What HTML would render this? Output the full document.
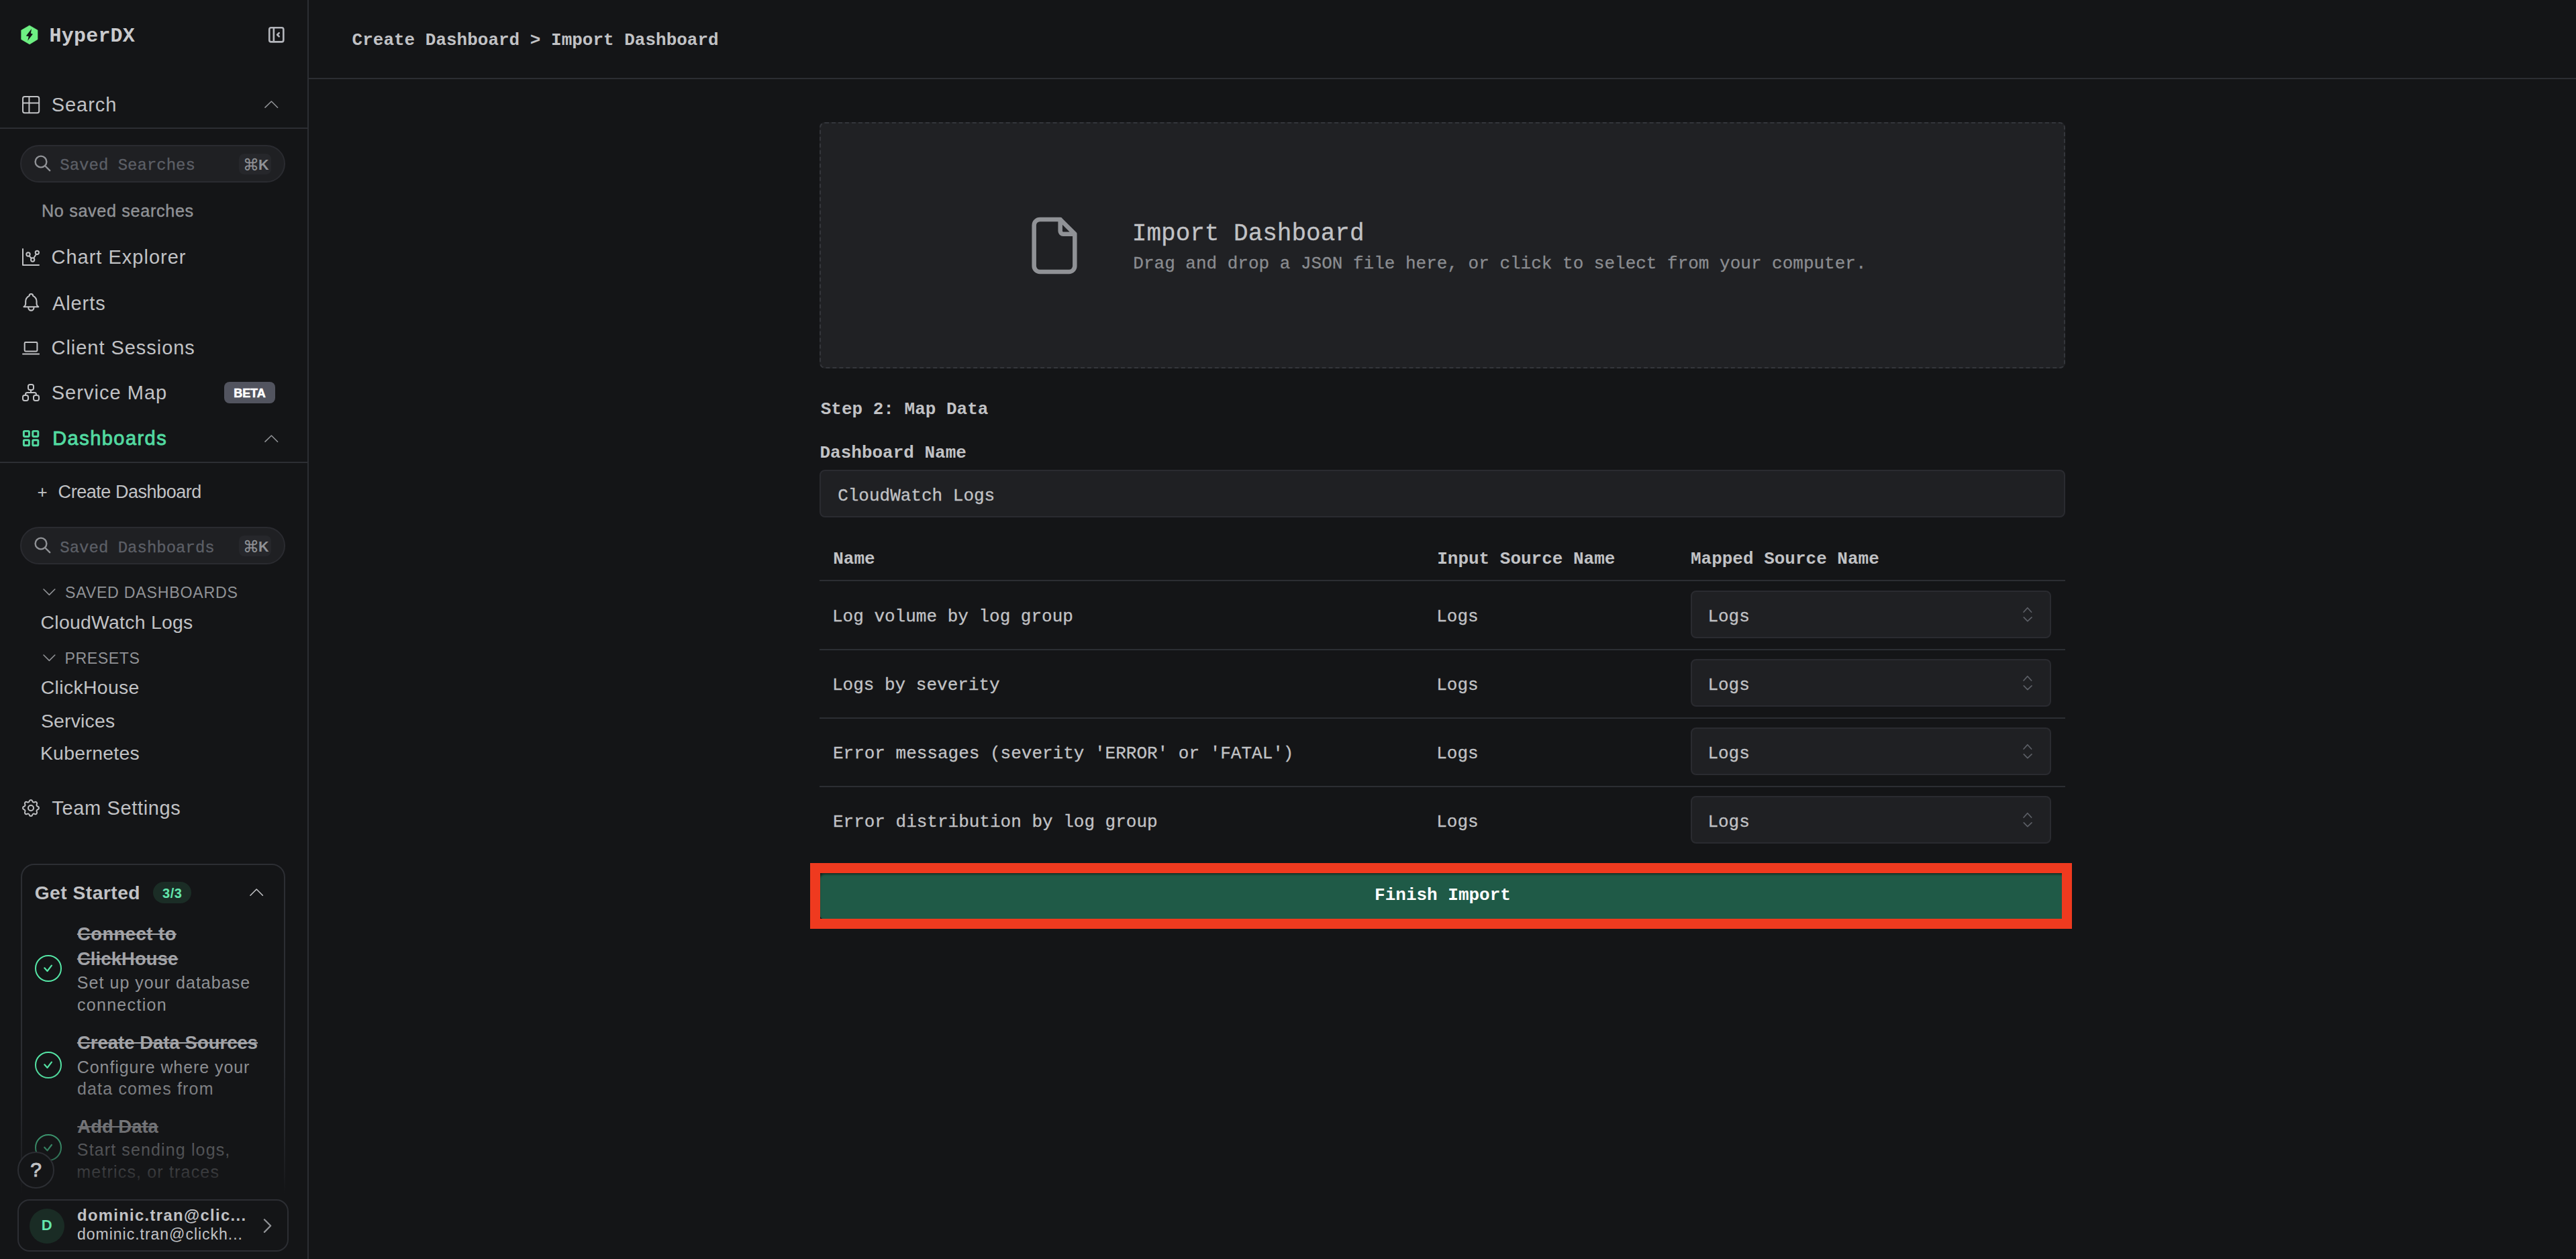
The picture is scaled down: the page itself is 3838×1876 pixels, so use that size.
<!DOCTYPE html>
<html><head><meta charset="utf-8"><title>HyperDX - Import Dashboard</title>
<style>
html,body{margin:0;padding:0;background:#141517;overflow:hidden;}
@media (min-width:2400px){html{zoom:2;}}
#root{position:relative;width:1919px;height:938px;overflow:hidden;background:#141517;font-family:'Liberation Sans', sans-serif;}
.t{position:absolute;white-space:nowrap;}
.b{position:absolute;}
.i{position:absolute;overflow:visible;}
</style></head><body><div id="root">
<div class="b" style="left:229px;top:0px;width:1.00px;height:938.00px;background:#2c2e33;"></div>
<svg class="i" style="left:0;top:0;width:40px;height:40px" viewBox="0 0 40 40"><polygon points="21.95,18.95 28.0,22.45 28.0,29.35 22.05,32.95 15.85,29.35 15.85,22.55" fill="#6ef083" stroke="#6ef083" stroke-width="0.3" stroke-linejoin="round"/><polygon points="23.49,21.5 19.41,26.79 21.37,27.09 20.62,30.41 24.47,25.43 22.96,24.9" fill="#141517"/></svg>
<div class="t" style="left:36.79px;top:17.56px;font-size:15px;line-height:19.5px;color:#c9cacd;font-family:'Liberation Mono', monospace;font-weight:700;letter-spacing:0.100px;">HyperDX</div>
<svg class="i" style="left:198.03px;top:17.93px;width:15.8px;height:15.8px;" viewBox="0 0 24 24" fill="none" stroke="#b4b6bc" stroke-width="2" stroke-linecap="round" stroke-linejoin="round"><path d="M4 6a2 2 0 0 1 2 -2h12a2 2 0 0 1 2 2v12a2 2 0 0 1 -2 2h-12a2 2 0 0 1 -2 -2z M9 4v16 M15 10l-2 2l2 2"/></svg>
<svg class="i" style="left:14.89px;top:69.79px;width:16.12px;height:16.12px;" viewBox="0 0 24 24" fill="none" stroke="#c1c2c5" stroke-width="1.5" stroke-linecap="round" stroke-linejoin="round"><path d="M3 5a2 2 0 0 1 2 -2h14a2 2 0 0 1 2 2v14a2 2 0 0 1 -2 2h-14a2 2 0 0 1 -2 -2z M3 10h18 M10 3v18"/></svg>
<div class="t" style="left:38.34px;top:69.05px;font-size:14.5px;line-height:18.85px;color:#c1c2c5;letter-spacing:0.491px;">Search</div>
<svg class="i" style="left:194.30px;top:72.60px;width:15.30px;height:10.60px" viewBox="0 0 15.30 10.60" fill="none" stroke="#909296" stroke-width="0.8" stroke-linecap="round" stroke-linejoin="round"><path d="M3.00 7.60 L7.70 3.00 L12.30 7.60"/></svg>
<div class="b" style="left:0px;top:95px;width:229.00px;height:1.00px;background:#2c2e33;"></div>
<div class="b" style="left:15px;top:108px;width:197.50px;height:28.00px;background:#1f2023;border:1px solid #2a2b30;border-radius:14px;box-sizing:border-box;"></div>
<svg class="i" style="left:24.40px;top:114.40px;width:14.4px;height:14.4px;" viewBox="0 0 24 24" fill="none" stroke="#909296" stroke-width="2" stroke-linecap="round" stroke-linejoin="round"><path d="M3 10a7 7 0 1 0 14 0a7 7 0 1 0 -14 0 M21 21l-6 -6"/></svg>
<div class="t" style="left:44.64px;top:115.71px;font-size:12px;line-height:15.6px;color:#5c5f66;font-family:'Liberation Mono', monospace;-webkit-text-stroke:0.15px #5c5f66;">Saved Searches</div>
<div class="b" style="left:178px;top:114.5px;width:23.80px;height:15.30px;background:#26272b;border-radius:4px;"></div>
<div class="t" style="left:181.00px;top:115.14px;font-size:12px;line-height:15.6px;color:#909296;">⌘</div>
<div class="t" style="left:192.48px;top:115.94px;font-size:10.8px;line-height:14.04px;color:#909296;font-weight:700;">K</div>
<div class="t" style="left:30.97px;top:148.84px;font-size:12.6px;line-height:16.38px;color:#909296;letter-spacing:0.333px;-webkit-text-stroke:0.2px #909296;">No saved searches</div>
<svg class="i" style="left:15.05px;top:183.50px;width:16.0px;height:16.0px;" viewBox="0 0 24 24" fill="none" stroke="#c1c2c5" stroke-width="1.5" stroke-linecap="round" stroke-linejoin="round"><path d="M3 3v18h18 M7 9a2 2 0 1 0 4 0a2 2 0 1 0 -4 0 M17 7a2 2 0 1 0 4 0a2 2 0 1 0 -4 0 M12 15a2 2 0 1 0 4 0a2 2 0 1 0 -4 0 M10.16 10.62l2.34 2.88 M15.088 13.328l2.837 -4.586"/></svg>
<div class="t" style="left:38.26px;top:182.55px;font-size:14.5px;line-height:18.85px;color:#c1c2c5;letter-spacing:0.500px;">Chart Explorer</div>
<svg class="i" style="left:14.87px;top:216.97px;width:16.37px;height:16.37px;" viewBox="0 0 24 24" fill="none" stroke="#c1c2c5" stroke-width="1.5" stroke-linecap="round" stroke-linejoin="round"><path d="M10 5a2 2 0 1 1 4 0a7 7 0 0 1 4 6v3a4 4 0 0 0 2 3h-16a4 4 0 0 0 2 -3v-3a7 7 0 0 1 4 -6 M9 17v1a3 3 0 0 0 6 0v-1"/></svg>
<div class="t" style="left:38.97px;top:216.75px;font-size:14.5px;line-height:18.85px;color:#c1c2c5;letter-spacing:0.458px;">Alerts</div>
<svg class="i" style="left:15.02px;top:250.99px;width:16.06px;height:16.06px;" viewBox="0 0 24 24" fill="none" stroke="#c1c2c5" stroke-width="1.5" stroke-linecap="round" stroke-linejoin="round"><path d="M3 19l18 0 M5 7a1 1 0 0 1 1 -1h12a1 1 0 0 1 1 1v8a1 1 0 0 1 -1 1h-12a1 1 0 0 1 -1 -1z"/></svg>
<div class="t" style="left:38.26px;top:249.95px;font-size:14.5px;line-height:18.85px;color:#c1c2c5;letter-spacing:0.480px;">Client Sessions</div>
<svg class="i" style="left:15.05px;top:284.50px;width:16.0px;height:16.0px;" viewBox="0 0 24 24" fill="none" stroke="#c1c2c5" stroke-width="1.5" stroke-linecap="round" stroke-linejoin="round"><path d="M3 17a2 2 0 0 1 2 -2h2a2 2 0 0 1 2 2v2a2 2 0 0 1 -2 2h-2a2 2 0 0 1 -2 -2z M15 17a2 2 0 0 1 2 -2h2a2 2 0 0 1 2 2v2a2 2 0 0 1 -2 2h-2a2 2 0 0 1 -2 -2z M9 5a2 2 0 0 1 2 -2h2a2 2 0 0 1 2 2v2a2 2 0 0 1 -2 2h-2a2 2 0 0 1 -2 -2z M6 15v-1a2 2 0 0 1 2 -2h8a2 2 0 0 1 2 2v1 M12 9l0 3"/></svg>
<div class="t" style="left:38.34px;top:283.65px;font-size:14.5px;line-height:18.85px;color:#c1c2c5;letter-spacing:0.518px;">Service Map</div>
<div class="b" style="left:166.8px;top:284.5px;width:38.00px;height:15.90px;background:#52545f;border-radius:4px;"></div>
<div class="t" style="left:174.10px;top:287.33px;font-size:9px;line-height:11.7px;color:#ffffff;font-weight:700;letter-spacing:-0.020px;-webkit-text-stroke:0.3px #ffffff;">BETA</div>
<svg class="i" style="left:14.95px;top:318.55px;width:16.1px;height:16.1px;" viewBox="0 0 24 24" fill="none" stroke="#52d9a0" stroke-width="2.2" stroke-linecap="round" stroke-linejoin="round"><path d="M4 5a1 1 0 0 1 1 -1h4a1 1 0 0 1 1 1v4a1 1 0 0 1 -1 1h-4a1 1 0 0 1 -1 -1z M14 5a1 1 0 0 1 1 -1h4a1 1 0 0 1 1 1v4a1 1 0 0 1 -1 1h-4a1 1 0 0 1 -1 -1z M4 15a1 1 0 0 1 1 -1h4a1 1 0 0 1 1 1v4a1 1 0 0 1 -1 1h-4a1 1 0 0 1 -1 -1z M14 15a1 1 0 0 1 1 -1h4a1 1 0 0 1 1 1v4a1 1 0 0 1 -1 1h-4a1 1 0 0 1 -1 -1z"/></svg>
<div class="t" style="left:39.11px;top:317.55px;font-size:14.5px;line-height:18.85px;color:#52d9a0;letter-spacing:0.725px;-webkit-text-stroke:0.45px #52d9a0;">Dashboards</div>
<svg class="i" style="left:194.30px;top:321.30px;width:15.30px;height:10.60px" viewBox="0 0 15.30 10.60" fill="none" stroke="#909296" stroke-width="0.8" stroke-linecap="round" stroke-linejoin="round"><path d="M3.00 7.60 L7.70 3.00 L12.30 7.60"/></svg>
<div class="b" style="left:0px;top:344px;width:229.00px;height:1.00px;background:#2c2e33;"></div>
<div class="t" style="left:27.77px;top:358.54px;font-size:13px;line-height:16.9px;color:#c1c2c5;">+</div>
<div class="t" style="left:43.31px;top:358.04px;font-size:13.5px;line-height:17.55px;color:#c1c2c5;letter-spacing:-0.231px;">Create Dashboard</div>
<div class="b" style="left:15px;top:392.6px;width:197.50px;height:28.00px;background:#1f2023;border:1px solid #2a2b30;border-radius:14px;box-sizing:border-box;"></div>
<svg class="i" style="left:24.40px;top:399.00px;width:14.4px;height:14.4px;" viewBox="0 0 24 24" fill="none" stroke="#909296" stroke-width="2" stroke-linecap="round" stroke-linejoin="round"><path d="M3 10a7 7 0 1 0 14 0a7 7 0 1 0 -14 0 M21 21l-6 -6"/></svg>
<div class="t" style="left:44.64px;top:400.31px;font-size:12px;line-height:15.6px;color:#5c5f66;font-family:'Liberation Mono', monospace;-webkit-text-stroke:0.15px #5c5f66;">Saved Dashboards</div>
<div class="b" style="left:178px;top:399.1px;width:23.80px;height:15.30px;background:#26272b;border-radius:4px;"></div>
<div class="t" style="left:181.00px;top:399.74px;font-size:12px;line-height:15.6px;color:#909296;">⌘</div>
<div class="t" style="left:192.48px;top:400.54px;font-size:10.8px;line-height:14.04px;color:#909296;font-weight:700;">K</div>
<svg class="i" style="left:29.50px;top:436.00px;width:14.40px;height:10.20px" viewBox="0 0 14.40 10.20" fill="none" stroke="#909296" stroke-width="0.8" stroke-linecap="round" stroke-linejoin="round"><path d="M3.00 3.00 L7.20 7.20 L11.40 3.00"/></svg>
<div class="t" style="left:48.47px;top:433.94px;font-size:11.6px;line-height:15.08px;color:#909296;letter-spacing:0.380px;">SAVED DASHBOARDS</div>
<div class="t" style="left:30.28px;top:454.55px;font-size:14.2px;line-height:18.46px;color:#c1c2c5;letter-spacing:0.132px;">CloudWatch Logs</div>
<svg class="i" style="left:29.50px;top:484.90px;width:14.40px;height:10.20px" viewBox="0 0 14.40 10.20" fill="none" stroke="#909296" stroke-width="0.8" stroke-linecap="round" stroke-linejoin="round"><path d="M3.00 3.00 L7.20 7.20 L11.40 3.00"/></svg>
<div class="t" style="left:48.25px;top:482.94px;font-size:11.6px;line-height:15.08px;color:#909296;letter-spacing:0.273px;">PRESETS</div>
<div class="t" style="left:30.38px;top:503.15px;font-size:14.2px;line-height:18.46px;color:#c1c2c5;letter-spacing:0.171px;">ClickHouse</div>
<div class="t" style="left:30.46px;top:528.05px;font-size:14.2px;line-height:18.46px;color:#c1c2c5;letter-spacing:0.101px;">Services</div>
<div class="t" style="left:29.94px;top:551.95px;font-size:14.2px;line-height:18.46px;color:#c1c2c5;letter-spacing:0.150px;">Kubernetes</div>
<svg class="i" style="left:15.05px;top:594.07px;width:16px;height:16px;" viewBox="0 0 24 24" fill="none" stroke="#c1c2c5" stroke-width="1.5" stroke-linecap="round" stroke-linejoin="round"><path d="M10.325 4.317c.426 -1.756 2.924 -1.756 3.35 0a1.724 1.724 0 0 0 2.573 1.066c1.543 -.94 3.31 .826 2.37 2.37a1.724 1.724 0 0 0 1.065 2.572c1.756 .426 1.756 2.924 0 3.35a1.724 1.724 0 0 0 -1.066 2.573c.94 1.543 -.826 3.31 -2.37 2.37a1.724 1.724 0 0 0 -2.572 1.065c-.426 1.756 -2.924 1.756 -3.35 0a1.724 1.724 0 0 0 -2.573 -1.066c-1.543 .94 -3.31 -.826 -2.37 -2.37a1.724 1.724 0 0 0 -1.065 -2.572c-1.756 -.426 -1.756 -2.924 0 -3.35a1.724 1.724 0 0 0 1.066 -2.573c-.94 -1.543 .826 -3.31 2.37 -2.37c1 .608 2.296 .07 2.572 -1.065z M9 12a3 3 0 1 0 6 0a3 3 0 0 0 -6 0"/></svg>
<div class="t" style="left:38.67px;top:593.05px;font-size:14.5px;line-height:18.85px;color:#c1c2c5;letter-spacing:0.322px;">Team Settings</div>
<div class="b" style="left:15.3px;top:643.3px;width:197.3px;height:290px;border:1px solid #2c2e33;border-radius:10px;box-sizing:border-box;"></div>
<div class="t" style="left:25.82px;top:656.15px;font-size:14.1px;line-height:18.33px;color:#c1c2c5;font-weight:700;letter-spacing:0.251px;">Get Started</div>
<div class="b" style="left:114px;top:657px;width:28.40px;height:16.00px;background:#1b2d26;border-radius:8px;"></div>
<div class="t" style="left:120.97px;top:659.13px;font-size:10px;line-height:13.0px;color:#63e6ad;font-weight:700;letter-spacing:0.295px;">3/3</div>
<svg class="i" style="left:183.40px;top:659.60px;width:15.20px;height:10.60px" viewBox="0 0 15.20 10.60" fill="none" stroke="#c1c2c5" stroke-width="0.8" stroke-linecap="round" stroke-linejoin="round"><path d="M3.00 7.60 L7.60 3.00 L12.20 7.60"/></svg>
<div class="b" style="left:26px;top:711.4px;width:19.9px;height:19.9px;border:1px solid #55e6a6;border-radius:50%;box-sizing:border-box;"></div>
<svg class="i" style="left:0;top:0;width:60px;height:741.4px" viewBox="0 0 60 741.4" fill="none" stroke="#55e6a6" stroke-width="1.1" stroke-linecap="round" stroke-linejoin="round"><path d="M33.15 721.15 L35.25 723.50 L38.45 719.30"/></svg>
<div class="t" style="left:57.44px;top:686.85px;font-size:13.7px;line-height:17.81px;color:#a2a3a7;font-weight:700;letter-spacing:0.251px;text-decoration:line-through;">Connect to</div>
<div class="t" style="left:57.44px;top:705.25px;font-size:13.7px;line-height:17.81px;color:#a2a3a7;font-weight:700;letter-spacing:0.068px;text-decoration:line-through;">ClickHouse</div>
<div class="t" style="left:57.43px;top:723.94px;font-size:12.5px;line-height:16.25px;color:#909296;letter-spacing:0.515px;">Set up your database</div>
<div class="t" style="left:57.47px;top:740.34px;font-size:12.5px;line-height:16.25px;color:#909296;letter-spacing:0.653px;">connection</div>
<div class="t" style="left:57.44px;top:767.85px;font-size:13.7px;line-height:17.81px;color:#a2a3a7;font-weight:700;letter-spacing:0.034px;text-decoration:line-through;">Create Data Sources</div>
<div class="b" style="left:26px;top:783.4px;width:19.9px;height:19.9px;border:1px solid #55e6a6;border-radius:50%;box-sizing:border-box;"></div>
<svg class="i" style="left:0;top:0;width:60px;height:813.4px" viewBox="0 0 60 813.4" fill="none" stroke="#55e6a6" stroke-width="1.1" stroke-linecap="round" stroke-linejoin="round"><path d="M33.15 793.15 L35.25 795.50 L38.45 791.30"/></svg>
<div class="t" style="left:57.37px;top:786.84px;font-size:12.5px;line-height:16.25px;color:#909296;letter-spacing:0.465px;">Configure where your</div>
<div class="t" style="left:57.48px;top:802.94px;font-size:12.5px;line-height:16.25px;color:#909296;letter-spacing:0.583px;">data comes from</div>
<div class="t" style="left:57.66px;top:830.25px;font-size:13.7px;line-height:17.81px;color:#a2a3a7;font-weight:700;letter-spacing:0.018px;text-decoration:line-through;">Add Data</div>
<div class="b" style="left:26px;top:845.1px;width:19.9px;height:19.9px;border:1px solid #55e6a6;border-radius:50%;box-sizing:border-box;"></div>
<svg class="i" style="left:0;top:0;width:60px;height:875.1px" viewBox="0 0 60 875.1" fill="none" stroke="#55e6a6" stroke-width="1.1" stroke-linecap="round" stroke-linejoin="round"><path d="M33.15 854.85 L35.25 857.20 L38.45 853.00"/></svg>
<div class="t" style="left:57.43px;top:848.34px;font-size:12.5px;line-height:16.25px;color:#909296;letter-spacing:0.564px;">Start sending logs,</div>
<div class="t" style="left:57.17px;top:865.24px;font-size:12.5px;line-height:16.25px;color:#909296;letter-spacing:0.584px;">metrics, or traces</div>
<div class="b" style="left:0px;top:790px;width:229.00px;height:99.00px;background:linear-gradient(to bottom, rgba(20,21,23,0) 0%, rgba(20,21,23,0.33) 48.5%, rgba(20,21,23,0.48) 65.7%, rgba(20,21,23,0.68) 82.8%, rgba(20,21,23,1) 100%);"></div>
<div class="b" style="left:0px;top:889px;width:229.00px;height:49.00px;background:#141517;"></div>
<div class="b" style="left:13px;top:857.8px;width:27.6px;height:27.6px;border:1px solid #2c2e33;border-radius:50%;background:#141517;box-sizing:border-box;"></div>
<div class="t" style="left:22.68px;top:861.45px;font-size:15px;line-height:19.5px;color:#c1c2c5;-webkit-text-stroke:0.5px #c1c2c5;">?</div>
<div class="b" style="left:13.2px;top:893.6px;width:201.6px;height:38.8px;border:1px solid #2c2e33;border-radius:9px;box-sizing:border-box;"></div>
<div class="b" style="left:22px;top:900.5px;width:26px;height:26px;border-radius:50%;background:#1a2c25;"></div>
<div class="t" style="left:30.86px;top:906.14px;font-size:11px;line-height:14.3px;color:#63e6ad;font-weight:700;">D</div>
<div class="t" style="left:57.51px;top:897.84px;font-size:11.9px;line-height:15.47px;color:#c1c2c5;font-weight:700;letter-spacing:0.670px;">dominic.tran@clic...</div>
<div class="t" style="left:57.52px;top:912.44px;font-size:11.5px;line-height:14.95px;color:#c1c2c5;letter-spacing:0.490px;">dominic.tran@clickh...</div>
<svg class="i" style="left:190.02px;top:903.94px;width:18.56px;height:18.56px;" viewBox="0 0 24 24" fill="none" stroke="#909296" stroke-width="1.5" stroke-linecap="round" stroke-linejoin="round"><path d="M9 6l6 6l-6 6"/></svg>
<div class="b" style="left:230px;top:58px;width:1689.00px;height:1.00px;background:#2c2e33;"></div>
<div class="t" style="left:262.29px;top:21.79px;font-size:13px;line-height:16.9px;color:#c1c2c5;font-family:'Liberation Mono', monospace;font-weight:700;">Create Dashboard &gt; Import Dashboard</div>
<div class="b" style="left:610.5px;top:91px;width:928px;height:183.5px;border:1px dashed #34363b;border-radius:4px;background:#202124;box-sizing:border-box;"></div>
<svg class="i" style="left:759.30px;top:156.90px;width:52px;height:52px;" viewBox="0 0 24 24" fill="none" stroke="#909296" stroke-width="1.5" stroke-linecap="round" stroke-linejoin="round"><path d="M14 3v4a1 1 0 0 0 1 1h4 M17 21h-10a2 2 0 0 1 -2 -2v-14a2 2 0 0 1 2 -2h7l5 5v11a2 2 0 0 1 -2 2z"/></svg>
<div class="t" style="left:843.42px;top:163.21px;font-size:18px;line-height:23.4px;color:#c1c2c5;font-family:'Liberation Mono', monospace;-webkit-text-stroke:0.15px #c1c2c5;">Import Dashboard</div>
<div class="t" style="left:844.17px;top:188.49px;font-size:13px;line-height:16.9px;color:#8a8c90;font-family:'Liberation Mono', monospace;-webkit-text-stroke:0.15px #8a8c90;">Drag and drop a JSON file here, or click to select from your computer.</div>
<div class="t" style="left:611.36px;top:297.09px;font-size:13px;line-height:16.9px;color:#c1c2c5;font-family:'Liberation Mono', monospace;font-weight:700;">Step 2: Map Data</div>
<div class="t" style="left:610.74px;top:329.59px;font-size:13px;line-height:16.9px;color:#c1c2c5;font-family:'Liberation Mono', monospace;font-weight:700;">Dashboard Name</div>
<div class="b" style="left:610.5px;top:350.2px;width:928px;height:35.5px;border:1px solid #2a2b30;border-radius:4px;background:#1f2023;box-sizing:border-box;"></div>
<div class="t" style="left:624.08px;top:361.29px;font-size:13px;line-height:16.9px;color:#c1c2c5;font-family:'Liberation Mono', monospace;-webkit-text-stroke:0.15px #c1c2c5;">CloudWatch Logs</div>
<div class="t" style="left:620.64px;top:408.59px;font-size:13px;line-height:16.9px;color:#c1c2c5;font-family:'Liberation Mono', monospace;font-weight:700;">Name</div>
<div class="t" style="left:1070.60px;top:408.59px;font-size:13px;line-height:16.9px;color:#c1c2c5;font-family:'Liberation Mono', monospace;font-weight:700;">Input Source Name</div>
<div class="t" style="left:1259.47px;top:408.59px;font-size:13px;line-height:16.9px;color:#c1c2c5;font-family:'Liberation Mono', monospace;font-weight:700;">Mapped Source Name</div>
<div class="b" style="left:610.5px;top:432px;width:928.00px;height:1.00px;background:#2c2e33;"></div>
<div class="t" style="left:620.00px;top:451.39px;font-size:13px;line-height:16.9px;color:#c1c2c5;font-family:'Liberation Mono', monospace;-webkit-text-stroke:0.15px #c1c2c5;">Log volume by log group</div>
<div class="t" style="left:1070.10px;top:451.39px;font-size:13px;line-height:16.9px;color:#c1c2c5;font-family:'Liberation Mono', monospace;-webkit-text-stroke:0.15px #c1c2c5;">Logs</div>
<div class="b" style="left:1259.7px;top:440.00px;width:268.3px;height:35.6px;border:1px solid #2a2b30;border-radius:4px;background:#1f2023;box-sizing:border-box;"></div>
<div class="t" style="left:1272.20px;top:451.39px;font-size:13px;line-height:16.9px;color:#c1c2c5;font-family:'Liberation Mono', monospace;-webkit-text-stroke:0.15px #c1c2c5;">Logs</div>
<svg class="i" style="left:1500px;top:440.00px;width:20px;height:36px" viewBox="0 0 20 36" fill="none" stroke="#5c5f66" stroke-width="0.85" stroke-linecap="round" stroke-linejoin="round"><path d="M7.55 16 L10.45 12.85 L13.3 16 M7.65 19.9 L10.45 22.85 L13.5 19.9"/></svg>
<div class="b" style="left:610.5px;top:483.4px;width:928.00px;height:1.00px;background:#2c2e33;"></div>
<div class="t" style="left:620.00px;top:502.44px;font-size:13px;line-height:16.9px;color:#c1c2c5;font-family:'Liberation Mono', monospace;-webkit-text-stroke:0.15px #c1c2c5;">Logs by severity</div>
<div class="t" style="left:1070.10px;top:502.44px;font-size:13px;line-height:16.9px;color:#c1c2c5;font-family:'Liberation Mono', monospace;-webkit-text-stroke:0.15px #c1c2c5;">Logs</div>
<div class="b" style="left:1259.7px;top:491.05px;width:268.3px;height:35.6px;border:1px solid #2a2b30;border-radius:4px;background:#1f2023;box-sizing:border-box;"></div>
<div class="t" style="left:1272.20px;top:502.44px;font-size:13px;line-height:16.9px;color:#c1c2c5;font-family:'Liberation Mono', monospace;-webkit-text-stroke:0.15px #c1c2c5;">Logs</div>
<svg class="i" style="left:1500px;top:491.05px;width:20px;height:36px" viewBox="0 0 20 36" fill="none" stroke="#5c5f66" stroke-width="0.85" stroke-linecap="round" stroke-linejoin="round"><path d="M7.55 16 L10.45 12.85 L13.3 16 M7.65 19.9 L10.45 22.85 L13.5 19.9"/></svg>
<div class="b" style="left:610.5px;top:534.4499999999999px;width:928.00px;height:1.00px;background:#2c2e33;"></div>
<div class="t" style="left:620.47px;top:553.49px;font-size:13px;line-height:16.9px;color:#c1c2c5;font-family:'Liberation Mono', monospace;-webkit-text-stroke:0.15px #c1c2c5;">Error messages (severity 'ERROR' or 'FATAL')</div>
<div class="t" style="left:1070.10px;top:553.49px;font-size:13px;line-height:16.9px;color:#c1c2c5;font-family:'Liberation Mono', monospace;-webkit-text-stroke:0.15px #c1c2c5;">Logs</div>
<div class="b" style="left:1259.7px;top:542.10px;width:268.3px;height:35.6px;border:1px solid #2a2b30;border-radius:4px;background:#1f2023;box-sizing:border-box;"></div>
<div class="t" style="left:1272.20px;top:553.49px;font-size:13px;line-height:16.9px;color:#c1c2c5;font-family:'Liberation Mono', monospace;-webkit-text-stroke:0.15px #c1c2c5;">Logs</div>
<svg class="i" style="left:1500px;top:542.10px;width:20px;height:36px" viewBox="0 0 20 36" fill="none" stroke="#5c5f66" stroke-width="0.85" stroke-linecap="round" stroke-linejoin="round"><path d="M7.55 16 L10.45 12.85 L13.3 16 M7.65 19.9 L10.45 22.85 L13.5 19.9"/></svg>
<div class="b" style="left:610.5px;top:585.5px;width:928.00px;height:1.00px;background:#2c2e33;"></div>
<div class="t" style="left:620.47px;top:604.54px;font-size:13px;line-height:16.9px;color:#c1c2c5;font-family:'Liberation Mono', monospace;-webkit-text-stroke:0.15px #c1c2c5;">Error distribution by log group</div>
<div class="t" style="left:1070.10px;top:604.54px;font-size:13px;line-height:16.9px;color:#c1c2c5;font-family:'Liberation Mono', monospace;-webkit-text-stroke:0.15px #c1c2c5;">Logs</div>
<div class="b" style="left:1259.7px;top:593.15px;width:268.3px;height:35.6px;border:1px solid #2a2b30;border-radius:4px;background:#1f2023;box-sizing:border-box;"></div>
<div class="t" style="left:1272.20px;top:604.54px;font-size:13px;line-height:16.9px;color:#c1c2c5;font-family:'Liberation Mono', monospace;-webkit-text-stroke:0.15px #c1c2c5;">Logs</div>
<svg class="i" style="left:1500px;top:593.15px;width:20px;height:36px" viewBox="0 0 20 36" fill="none" stroke="#5c5f66" stroke-width="0.85" stroke-linecap="round" stroke-linejoin="round"><path d="M7.55 16 L10.45 12.85 L13.3 16 M7.65 19.9 L10.45 22.85 L13.5 19.9"/></svg>
<div class="b" style="left:610.5px;top:650px;width:928px;height:35px;background:#1f5a47;border-radius:4px;box-shadow:inset 0 1.5px 1.5px rgba(0,0,0,0.5);"></div>
<div class="t" style="left:1024.04px;top:659.09px;font-size:13px;line-height:16.9px;color:#ffffff;font-family:'Liberation Mono', monospace;font-weight:700;">Finish Import</div>
<div class="b" style="left:603.5px;top:643px;width:940px;height:49px;border:7.5px solid #ef3a1f;box-sizing:border-box;"></div>
</div></body></html>
